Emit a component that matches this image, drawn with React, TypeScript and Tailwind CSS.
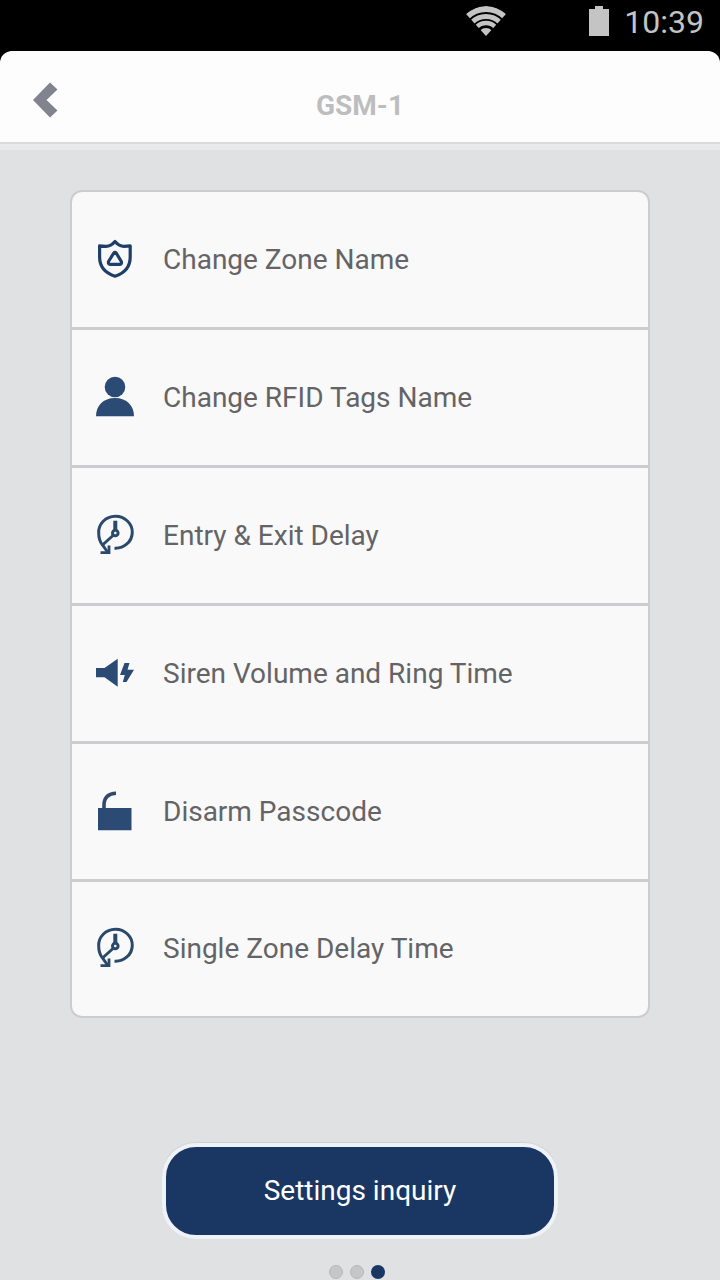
import React from 'react';

const ZoneIcon = () => (
  <svg viewBox="0 0 40 40" className="size-10 overflow-visible" fill="none" stroke="#1f3f68" strokeWidth="3.2" strokeLinejoin="round">
    <path d="M20 1.500 C17.500 4.500 15 6.300 11 6.300 Q7.500 6.300 4.600 5.800 V17 C4.600 27 10 33 20 36.200 C30 33 35.200 27 35.200 17 V5.800 Q32.500 6.300 29 6.300 C25 6.300 22.500 4.500 20 1.500 Z" />
    <path d="M18.800 13 Q20 11.500 21.200 13 L26.300 21.500 Q27 24.300 25 24.300 H15 Q13 24.300 13.500 21.500 Z" />
  </svg>
);

const UserIcon = () => (
  <svg viewBox="0 0 40 40" className="size-10 overflow-visible" fill="#2b4a74">
    <circle cx="20" cy="9" r="10.300" />
    <path d="M1 38.300 C1 28 8 20 20 20 C32 20 39 28 39 38.300 Z" />
  </svg>
);

const DelayIcon = () => (
  <svg viewBox="0 0 40 40" className="size-10 overflow-visible" fill="none" stroke="#2b4a6b" strokeWidth="3">
    <path d="M12.500 36 L7.500 29 C4.500 25.500 3.700 21 3.700 17 A16.800 16 0 1 1 19.500 32.200" />
    <path d="M20.300 4.700 V14" strokeWidth="4" />
    <circle cx="20.300" cy="17" r="2.800" />
    <path d="M18 19.500 L7.500 29" />
    <path d="M14 29.500 V36.700 H5.500" strokeWidth="2.800" />
  </svg>
);

const SirenIcon = () => (
  <svg viewBox="0 0 40 40" className="size-10" fill="#2b4a74">
    <path d="M1 14 H9.500 L22.700 4.800 V32.800 L9.500 23.200 H1 Z" />
    <path d="M29.500 9 H34.500 L32.500 15.800 H39 L31.500 28 H27.800 L29.800 21 H25 Z" />
  </svg>
);

const LockIcon = () => (
  <svg viewBox="0 0 40 40" className="size-10 overflow-visible">
    <path d="M3 16 H36.500 V38.200 H3 Z" fill="#2b4a74" />
    <path d="M9 17 V13 C9 5.500 13.500 1.300 21 1.300" fill="none" stroke="#2f4a6c" strokeWidth="3.600" />
  </svg>
);

const items = [
  { label: 'Change Zone Name', Icon: ZoneIcon },
  { label: 'Change RFID Tags Name', Icon: UserIcon },
  { label: 'Entry & Exit Delay', Icon: DelayIcon },
  { label: 'Siren Volume and Ring Time', Icon: SirenIcon },
  { label: 'Disarm Passcode', Icon: LockIcon },
  { label: 'Single Zone Delay Time', Icon: DelayIcon },
];

const StatusBar = () => (
  <div className="flex h-[51px] items-start justify-end bg-black pr-4 text-[#c4c4c4]">
    <svg viewBox="0 0 40 30" className="mt-[6px] mr-[83px] h-[30px] w-10">
      <clipPath id="fan">
        <path d="M20 30 L0 8 Q20 -8 40 8 Z" />
      </clipPath>
      <g clipPath="url(#fan)" fill="none" stroke="currentColor">
        <circle cx="20" cy="30" r="27" strokeWidth="6" />
        <circle cx="20" cy="30" r="19.500" strokeWidth="5" />
        <circle cx="20" cy="30" r="13" strokeWidth="4.500" />
        <circle cx="20" cy="30" r="4" strokeWidth="8" />
      </g>
    </svg>
    <svg viewBox="0 0 20 30" className="mt-[6px] mr-[15px] h-[30px] w-5" fill="currentColor">
      <path d="M6 0 H14 V3 H20 V30 H0 V3 H6 Z" />
    </svg>
    <span className="mt-[2px] text-[32px] leading-10">10:39</span>
  </div>
);

export default function App() {
  return (
    <div className="flex min-h-screen flex-col bg-[#e0e1e3] font-[Roboto,sans-serif]">
      <StatusBar />
      <div className="bg-black">
        <header className="grid h-[99px] grid-cols-[80px_1fr_80px] items-center rounded-t-xl border-b-[6px] border-[#e9eaec] bg-[#fdfdfd] shadow-[inset_0_-2px_0_#d9dada]">
          <button aria-label="Back" className="flex h-full items-center pt-1 pl-8">
            <svg viewBox="0 0 26 36" className="h-9 w-[26px]" fill="#83838f">
              <path d="M18 0.500 L25.500 7.500 L14.500 18 L25.500 28.500 L18 35.500 L1 18 Z" />
            </svg>
          </button>
          <h1 className="pt-4 text-center text-[28px] leading-8 font-bold text-[#bdbdbf]">GSM-1</h1>
        </header>
      </div>

      <main className="flex flex-1 flex-col items-center px-[70px] pt-10">
        <ul className="w-full overflow-hidden rounded-xl border-2 border-[#cdcdcf] bg-[#f9f9f9]">
          {items.map(({ label, Icon }) => (
            <li key={label} className="h-[138px] border-b-[3px] border-[#cdcdcf] last:h-[134px] last:border-b-0">
              <button className="flex h-full w-full items-center gap-7 pl-[23px] text-left text-[28px] leading-9 text-[#646466]">
                <Icon />
                {label}
              </button>
            </li>
          ))}
        </ul>

        <button className="mt-[125px] h-24 w-full max-w-[396px] rounded-[34px] border-4 border-[#eff2f8] bg-[#1a3764] text-[28px] leading-9 text-white shadow-[0_-1px_1px_#d0d0d0]">
          Settings inquiry
        </button>

        <div className="mt-[26px] flex gap-[7px] pr-[6px]">
          <span className="size-[14px] rounded-full border border-[#b8b8ba] bg-[#c6c6c8]" />
          <span className="size-[14px] rounded-full border border-[#b8b8ba] bg-[#c6c6c8]" />
          <span className="size-[14px] rounded-full bg-[#1a3764]" />
        </div>
      </main>
    </div>
  );
}
